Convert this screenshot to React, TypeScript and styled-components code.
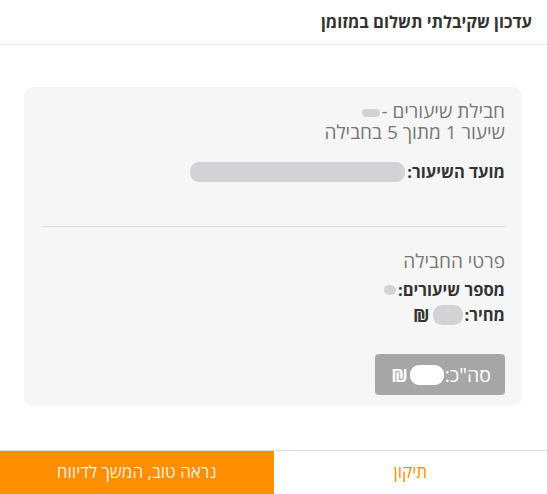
import React from "react";
import styled, { createGlobalStyle } from "styled-components";

const Global = createGlobalStyle`
  html, body { margin: 0; padding: 0; background: #fff; }
  body { font-family: "Open Sans", "Noto Sans", sans-serif; }
  * { box-sizing: border-box; }
`;

const Page = styled.div`
  direction: rtl;
  width: 547px;
  height: 494px;
  display: flex;
  flex-direction: column;
  background: #fff;
`;

const Header = styled.header`
  height: 45px;
  border-bottom: 1px solid #e6e6e6;
  display: flex;
  align-items: center;
  padding: 0 15px 2px;
  font-size: 16.5px;
  font-weight: 700;
  color: #333;
`;

const Body = styled.main`
  flex: 1;
  padding: 42px 25px 0 24px;
`;

const Card = styled.section`
  background: #f6f6f6;
  border-radius: 9px;
  height: 319px;
  padding: 14px 17px 0;
  display: flex;
  flex-direction: column;
`;

const Light = styled.div<{ $top?: number }>`
  font-size: 19px;
  line-height: 21px;
  color: #777;
  margin-top: ${(p) => p.$top ?? 0}px;
`;

const Line = styled.div<{ $top?: number }>`
  display: flex;
  align-items: center;
  gap: 2px;
  font-size: 16.5px;
  font-weight: 700;
  color: #333;
  line-height: 20px;
  margin-top: ${(p) => p.$top ?? 0}px;
`;

const Blob = styled.span<{ $w: number; $h: number; $c?: string }>`
  display: inline-block;
  width: ${(p) => p.$w}px;
  height: ${(p) => p.$h}px;
  border-radius: ${(p) => Math.min(p.$h / 2, 9)}px;
  background: ${(p) => p.$c ?? "#d3d3d5"};
  vertical-align: middle;
`;

const Divider = styled.hr`
  border: none;
  border-top: 1px solid #dcdcdc;
  margin: 44px 0 0;
`;

const Shekel = styled.span`
  font-weight: 700;
  font-size: 18px;
  margin-right: 1px;
`;

const TotalRow = styled.div`
  margin-top: 29px;
  display: flex;
`;

const Total = styled.div`
  background: #a6a6a6;
  color: #fff;
  border-radius: 4px;
  height: 41px;
  padding: 0 14px 0 16px;
  display: flex;
  align-items: center;
  gap: 1px;
  font-size: 19.5px;
`;

const Footer = styled.footer`
  height: 44px;
  border-top: 1px solid #dedede;
  display: grid;
  grid-template-columns: 1fr 1fr;
`;

const Btn = styled.button<{ $primary?: boolean }>`
  border: none;
  margin: 0;
  font-family: inherit;
  font-size: 17px;
  background: ${(p) => (p.$primary ? "#fe8f00" : "#fff")};
  color: ${(p) => (p.$primary ? "#fbeedd" : "#fe8f00")};
  display: flex;
  align-items: center;
  justify-content: center;
  padding: 0 0 2px;
  cursor: pointer;
`;

export default function App() {
  return (
    <>
      <Global />
      <Page>
        <Header>עדכון שקיבלתי תשלום במזומן</Header>
        <Body>
          <Card>
            <Light>
              חבילת שיעורים -<Blob $w={18} $h={8} style={{ marginRight: 1 }} />
            </Light>
            <Light>שיעור 1 מתוך 5 בחבילה</Light>
            <Line $top={19}>
              מועד השיעור:
              <Blob $w={215} $h={20} />
            </Line>
            <Divider />
            <Light $top={24}>פרטי החבילה</Light>
            <Line $top={8}>
              מספר שיעורים:
              <Blob $w={12} $h={10} />
            </Line>
            <Line $top={5}>
              מחיר:
              <Blob $w={30} $h={20} />
              <Shekel>₪</Shekel>
            </Line>
            <TotalRow>
              <Total>
                סה"כ:
                <Blob $w={34} $h={20} $c="#fff" />
                <Shekel>₪</Shekel>
              </Total>
            </TotalRow>
          </Card>
        </Body>
        <Footer>
          <Btn>תיקון</Btn>
          <Btn $primary>נראה טוב, המשך לדיווח</Btn>
        </Footer>
      </Page>
    </>
  );
}
